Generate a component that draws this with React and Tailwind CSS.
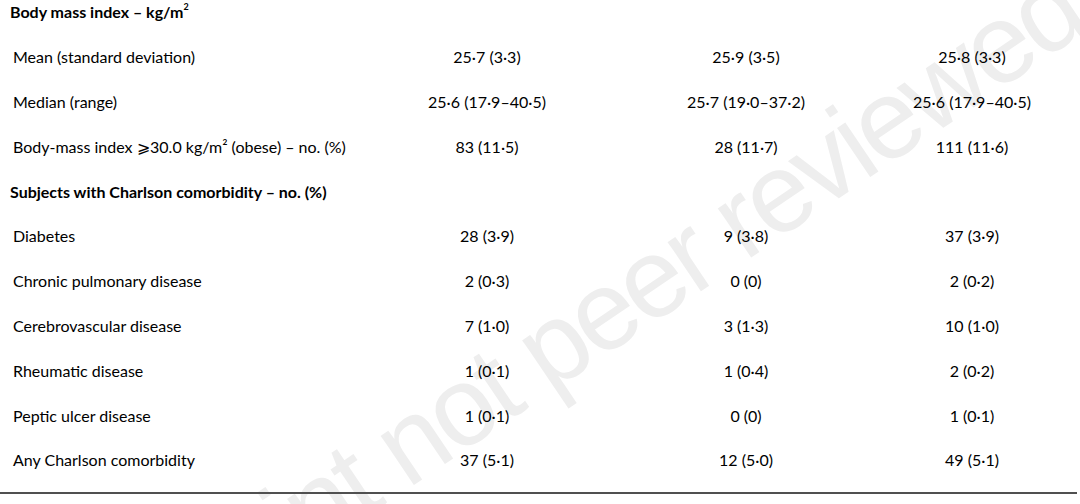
import React from "react";

const rows = [
  { head: true, label: "bmi" },
  { label: "Mean (standard deviation)", values: ["25·7 (3·3)", "25·9 (3·5)", "25·8 (3·3)"] },
  { label: "Median (range)", values: ["25·6 (17·9–40·5)", "25·7 (19·0–37·2)", "25·6 (17·9–40·5)"] },
  { label: "Body-mass index ⩾30.0 kg/m² (obese) – no. (%)", values: ["83 (11·5)", "28 (11·7)", "111 (11·6)"] },
  { head: true, label: "Subjects with Charlson comorbidity – no. (%)" },
  { label: "Diabetes", values: ["28 (3·9)", "9 (3·8)", "37 (3·9)"] },
  { label: "Chronic pulmonary disease", values: ["2 (0·3)", "0 (0)", "2 (0·2)"] },
  { label: "Cerebrovascular disease", values: ["7 (1·0)", "3 (1·3)", "10 (1·0)"] },
  { label: "Rheumatic disease", values: ["1 (0·1)", "1 (0·4)", "2 (0·2)"] },
  { label: "Peptic ulcer disease", values: ["1 (0·1)", "0 (0)", "1 (0·1)"] },
  { label: "Any Charlson comorbidity", values: ["37 (5·1)", "12 (5·0)", "49 (5·1)"] },
];

// light diagonal "Preprint not peer reviewed" stamp behind the table
const Watermark = () => (
  <div className="absolute left-[408px] top-[490px] origin-top-left -rotate-[34deg] pointer-events-none select-none text-[112px] leading-none tracking-[-0.035em] text-[#eeeeee] [font-family:'Liberation_Sans',Arial,sans-serif]">
    <span className="absolute right-0 top-[-95px] whitespace-nowrap">Preprint&nbsp;</span>
    <span className="absolute left-0 top-[-95px] whitespace-nowrap">not peer reviewed</span>
  </div>
);

const App = () => {
  return (
    <div className="relative w-[1080px] h-[504px] overflow-hidden bg-white text-black text-[16px] [font-family:Lato,'Noto_Sans','DejaVu_Sans',sans-serif]">
      <Watermark />
      <div className="relative -mt-[10px]">
        {rows.map((row, i) =>
          row.head ? (
            <div key={i} className="h-[44.8px] flex items-center pl-[10px] font-bold">
              {row.label === "bmi" ? (
                <span>
                  Body mass index – kg/m
                  <span className="relative -top-[8px] text-[9px]">2</span>
                </span>
              ) : (
                row.label
              )}
            </div>
          ) : (
            <div
              key={i}
              className="h-[44.8px] grid grid-cols-[380px_214px_304px_148px] items-center"
            >
              <div className="pl-[13px] whitespace-nowrap">{row.label}</div>
              {row.values.map((v, j) => (
                <div key={j} className="text-center whitespace-nowrap">
                  {v}
                </div>
              ))}
            </div>
          )
        )}
        <div className="mt-[9px] w-[1077px] h-[2px] bg-[#505050]" />
      </div>
    </div>
  );
};

export default App;
